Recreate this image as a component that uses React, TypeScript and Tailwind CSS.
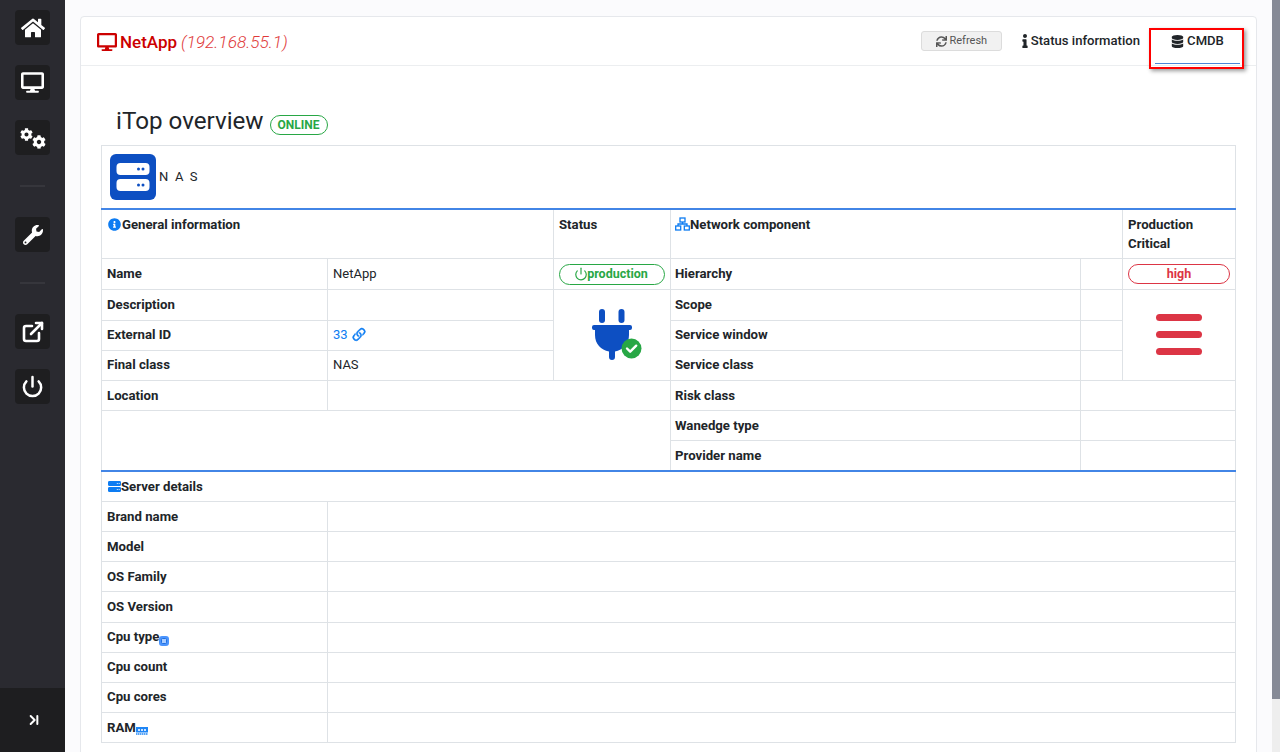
import React from "react";
import { FaHome, FaDesktop, FaCog, FaWrench, FaSync, FaInfo, FaDatabase, FaInfoCircle } from "react-icons/fa";
import { BsLink45Deg } from "react-icons/bs";
import { ExternalLink, Power, ChevronLast } from "lucide-react";

function SideBtn({ children }: { children: React.ReactNode }) {
  return <div className="relative w-[35px] h-[35px] rounded bg-[#1e1e20] text-white flex items-center justify-center">{children}</div>;
}

function NetIcon() {
  return (
    <svg width="15" height="14" viewBox="0 0 15 14" className="inline-block" fill="none" stroke="#0d7cf2" strokeWidth="1.3">
      <rect x="5" y="1" width="5" height="4" />
      <rect x="0.700" y="9" width="5" height="4" />
      <rect x="9.300" y="9" width="5" height="4" />
      <path d="M7.500 5v2M3 9V7h9v2" />
    </svg>
  );
}

function ServerIcon() {
  return (
    <svg width="13" height="13" viewBox="0 0 14 13" className="inline-block ml-[1px]">
      <rect x="0" y="0.500" width="14" height="5.500" rx="1.500" fill="#0d7cf2" />
      <rect x="0" y="7" width="14" height="5.500" rx="1.500" fill="#0d7cf2" />
      <circle cx="10" cy="3.200" r=".6" fill="#fff" />
      <circle cx="12" cy="3.200" r=".6" fill="#fff" />
      <circle cx="10" cy="9.800" r=".6" fill="#fff" />
      <circle cx="12" cy="9.800" r=".6" fill="#fff" />
    </svg>
  );
}

function NasIcon() {
  return (
    <svg width="46" height="46" viewBox="0 0 46 46">
      <rect width="46" height="46" rx="6" fill="#0d4fc2" />
      <rect x="6.500" y="9" width="33" height="12" rx="4" fill="#fff" />
      <rect x="6.500" y="25" width="33" height="12" rx="4" fill="#fff" />
      <circle cx="28.500" cy="15" r="1.500" fill="#0d4fc2" />
      <circle cx="33" cy="15" r="1.500" fill="#0d4fc2" />
      <circle cx="28.500" cy="31" r="1.500" fill="#0d4fc2" />
      <circle cx="33" cy="31" r="1.500" fill="#0d4fc2" />
    </svg>
  );
}

function PlugIcon() {
  return (
    <svg width="50" height="52" viewBox="0 0 50 52">
      <rect x="7" y="0" width="6" height="14" rx="3" fill="#0d4fc2" />
      <rect x="26.500" y="0" width="6" height="14" rx="3" fill="#0d4fc2" />
      <path d="M2 16h36a2 2 0 0 1 2 2v1a2 2 0 0 1-2 2h-1v5c0 9-6 15-14 16.500v5.500a3 3 0 0 1-6 0v-5.500C9 41 3 35 3 26v-5H2a2 2 0 0 1-2-2v-1a2 2 0 0 1 2-2z" fill="#0d4fc2" />
      <circle cx="39.500" cy="39.500" r="10" fill="#28a745" />
      <path d="M35 39.500l3.200 3.200 6-6" fill="none" stroke="#fff" strokeWidth="2.400" strokeLinecap="round" strokeLinejoin="round" />
    </svg>
  );
}

function CpuIcon() {
  return (
    <svg width="10" height="10" viewBox="0 0 10 10" className="inline-block align-[-5px]">
      <rect width="10" height="10" rx="3" fill="#4a94fd" />
      <rect x="2.500" y="2.500" width="5" height="5" rx="1" fill="#a8ccff" stroke="#1f6fe0" strokeWidth="1" />
    </svg>
  );
}

function RamIcon() {
  return (
    <svg width="12" height="8" viewBox="0 0 12 8" className="inline-block align-[-3px]">
      <rect y="0" width="12" height="5.500" fill="#1f86f5" />
      <rect x="2" y="2" width="2" height="2" fill="#cfe4ff" />
      <rect x="5" y="2" width="2" height="2" fill="#cfe4ff" />
      <rect x="8" y="2" width="2" height="2" fill="#cfe4ff" />
      <path d="M0 7h12" stroke="#1f86f5" strokeWidth="1.400" strokeDasharray="1.500 .5" />
    </svg>
  );
}

const cell = "border border-[#dee2e6] px-[5px] py-0 align-middle";
const lab = cell + " font-bold text-[13.2px]";
const netLab = lab + " pl-[4px]";
const headCell = lab + " align-top border-t-2 border-t-[#4285e6] pt-[5px] leading-[19px]";

function Row({ h, children }: { h: string; children: React.ReactNode }) {
  return <tr className={h}>{children}</tr>;
}

const serverRows: [string, React.ReactNode, string][] = [
  ["Brand name", null, "h-[30px]"],
  ["Model", null, "h-[30px]"],
  ["OS Family", null, "h-[30px]"],
  ["OS Version", null, "h-[31px]"],
  ["Cpu type", <CpuIcon key="c" />, "h-[30px] [&>td]:pb-[2px]"],
  ["Cpu count", null, "h-[30px] [&>td]:pb-[2px]"],
  ["Cpu cores", null, "h-[30px] [&>td]:pb-[2px]"],
  ["RAM", <RamIcon key="r" />, "h-[30px]"],
];

export default function App() {
  return (
    <div className="flex h-[752px] w-[1280px] overflow-hidden bg-[#fbfbfd] text-[13px] text-[#212529] font-['Roboto',sans-serif]">
      <aside className="w-[65px] shrink-0 bg-[#2a2a30] flex flex-col">
        <div className="flex-1 flex flex-col items-center pt-[10px]">
          <SideBtn><FaHome size={24} /></SideBtn>
          <div className="h-[20px]" />
          <SideBtn><FaDesktop size={23} /></SideBtn>
          <div className="h-[20px]" />
          <SideBtn>
            <FaCog size={13} className="absolute left-[5px] top-[8px]" />
            <FaCog size={14} className="absolute left-[17px] top-[15px]" />
          </SideBtn>
          <div className="w-[25px] h-[2px] bg-[#36363c] mt-[30px] mb-[30px]" />
          <SideBtn><FaWrench size={20} /></SideBtn>
          <div className="w-[25px] h-[2px] bg-[#36363c] mt-[30px] mb-[30px]" />
          <SideBtn><ExternalLink size={24} strokeWidth={2.6} /></SideBtn>
          <div className="h-[20px]" />
          <SideBtn><Power size={23} strokeWidth={2.6} /></SideBtn>
        </div>
        <div className="h-[64px] bg-[#1e1e20] text-white flex items-center justify-center">
          <ChevronLast size={16} strokeWidth={3} className="ml-[2px]" />
        </div>
      </aside>

      <main className="flex-1 min-w-0 pl-[15px] pr-[15px] pt-[16px]">
        <section className="h-[800px] bg-white border border-[#e6e8ec] rounded-[4px]">
          <header className="h-[49px] border-b border-[#eceef0] flex items-start pl-[16px] pr-[12px] pt-[14px]">
            <FaDesktop size={20} className="text-[#cc0000] mr-[3px] mt-[1px]" />
            <span className="text-[17px] leading-[22px] font-medium text-[#cc0000]">NetApp</span>
            <span className="ml-[4px] text-[17.300px] leading-[22px] font-light italic text-[#e03a3a]">(192.168.55.1)</span>
            <div className="ml-auto flex items-start">
              <button className="w-[81px] h-[20px] bg-[#f1f1f1] border border-[#dcdcdc] rounded-[3px] text-[11px] text-[#555] flex items-center justify-center gap-[3px]">
                <FaSync size={11} />Refresh
              </button>
              <span className="ml-[21px] h-[20px] font-medium flex items-center text-[13.100px]">
                <span className="w-[8px] flex justify-start"><FaInfo size={14} className="-ml-[4px]" /></span>Status information
              </span>
              <div className="ml-[9px] relative w-[95px] h-[41px] mt-[-3px] border-[2px] border-[#ff0000] shadow-[2px_2px_4px_rgba(0,0,0,0.4)] font-medium text-[13.100px] flex justify-center pt-[2px] pl-[2px]">
                <span className="flex items-center h-[18px] gap-[3px]"><FaDatabase size={13} />CMDB</span>
                <div className="absolute left-[4px] right-[2px] bottom-[3px] h-px bg-[#4a86d8]" />
              </div>
            </div>
          </header>

          <div className="px-[20px]">
            <div className="h-[79px] pl-[15px] pt-[32px] flex items-center">
              <h1 className="text-[24.200px] leading-[29px] font-normal">iTop overview</h1>
              <span className="ml-[6px] mt-[6px] w-[58px] h-[20px] rounded-full border border-[#28a745] text-[#28a745] text-[12px] font-bold flex items-center justify-center">ONLINE</span>
            </div>
            <table className="w-[1134px] table-fixed border-collapse">
              <colgroup>
                <col className="w-[226px]" />
                <col className="w-[226px]" />
                <col className="w-[117px]" />
                <col className="w-[410px]" />
                <col className="w-[42px]" />
                <col className="w-[113px]" />
              </colgroup>
              <tbody>
                <Row h="h-[63px]">
                  <td colSpan={6} className={cell + " pl-[8px] border-b-0"}>
                    <div className="flex items-center"><NasIcon /><span className="ml-[3px] tracking-[0.5em]">NAS</span></div>
                  </td>
                </Row>
                <Row h="h-[50px]">
                  <td colSpan={2} className={headCell}>
                    <span className="flex items-center"><FaInfoCircle size={13} className="text-[#0d7cf2] ml-[1px] mr-[1px]" />General information</span>
                  </td>
                  <td className={headCell}>Status</td>
                  <td colSpan={2} className={headCell + " pl-[4px]"}>
                    <span className="flex items-center"><NetIcon />Network component</span>
                  </td>
                  <td className={headCell}>Production Critical</td>
                </Row>
                <Row h="h-[31px]">
                  <td className={lab}>Name</td>
                  <td className={cell}>NetApp</td>
                  <td className={cell}>
                    <div className="h-[21px] pr-[2px] rounded-full border border-[#28a745] text-[#28a745] text-[12.500px] font-bold flex items-center justify-center">
                      <Power size={14} strokeWidth={2} className="-mr-[1px]" />production
                    </div>
                  </td>
                  <td className={netLab}>Hierarchy</td>
                  <td className={cell}></td>
                  <td className={cell}>
                    <div className="h-[20px] rounded-full border border-[#dc3545] text-[#dc3545] text-[12.500px] font-bold flex items-center justify-center">high</div>
                  </td>
                </Row>
                <Row h="h-[31px] [&>td]:pb-[1px]">
                  <td className={lab}>Description</td>
                  <td className={cell}></td>
                  <td rowSpan={3} className={cell + " text-center"}>
                    <div className="flex justify-center pl-[10px]"><PlugIcon /></div>
                  </td>
                  <td className={netLab}>Scope</td>
                  <td className={cell}></td>
                  <td rowSpan={3} className={cell}>
                    <div className="flex flex-col items-center gap-[10px]">
                      <div className="w-[46px] h-[7px] rounded-full bg-[#dc3545]" />
                      <div className="w-[46px] h-[7px] rounded-full bg-[#dc3545]" />
                      <div className="w-[46px] h-[7px] rounded-full bg-[#dc3545]" />
                    </div>
                  </td>
                </Row>
                <Row h="h-[30px] [&>td]:pb-[2px]">
                  <td className={lab}>External ID</td>
                  <td className={cell + " text-[#0d7cf2]"}>
                    <span className="flex items-center gap-[2px]">33<BsLink45Deg size={18} stroke="currentColor" strokeWidth={0.5} /></span>
                  </td>
                  <td className={netLab}>Service window</td>
                  <td className={cell}></td>
                </Row>
                <Row h="h-[30px] [&>td]:pb-[2px]">
                  <td className={lab}>Final class</td>
                  <td className={cell}>NAS</td>
                  <td className={netLab}>Service class</td>
                  <td className={cell}></td>
                </Row>
                <Row h="h-[30px]">
                  <td className={lab}>Location</td>
                  <td colSpan={2} className={cell}></td>
                  <td className={netLab}>Risk class</td>
                  <td colSpan={2} className={cell}></td>
                </Row>
                <Row h="h-[30px]">
                  <td colSpan={3} rowSpan={2} className={cell}></td>
                  <td className={netLab}>Wanedge type</td>
                  <td colSpan={2} className={cell}></td>
                </Row>
                <Row h="h-[30px] [&>td]:pt-[1px]">
                  <td className={netLab}>Provider name</td>
                  <td colSpan={2} className={cell}></td>
                </Row>
                <Row h="h-[31px] [&>td]:pt-[1px]">
                  <td colSpan={6} className={lab + " border-t-2 border-t-[#4285e6]"}>
                    <span className="flex items-center"><ServerIcon />Server details</span>
                  </td>
                </Row>
                {serverRows.map(([name, icon, h]) => (
                  <Row h={h} key={name}>
                    <td className={lab}>{name}{icon}</td>
                    <td colSpan={5} className={cell}></td>
                  </Row>
                ))}
              </tbody>
            </table>
          </div>
        </section>
      </main>

      <div className="w-[8px] shrink-0 bg-[#eeeeee] flex flex-col">
        <div className="h-[699px] bg-[#868a96]" />
      </div>
    </div>
  );
}
